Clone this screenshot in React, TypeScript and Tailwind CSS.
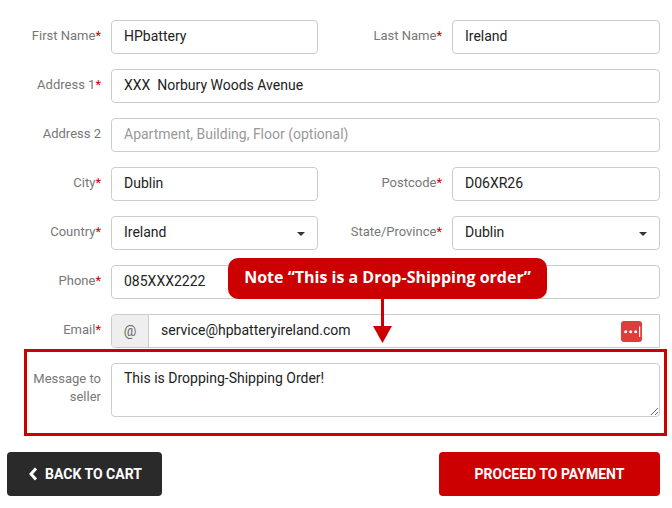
import React from "react";

const inputCls =
  "h-[34px] w-full rounded-[4px] border border-[#cccccc] bg-white pl-3 pr-3 pb-[2px] text-[14px] text-[#222222] placeholder:text-[#999999] outline-none";

function Label({ text, req = true, className = "" }: { text: string; req?: boolean; className?: string }) {
  return (
    <div className={`pt-[7px] text-right text-[13px] leading-[18px] text-[#777777] ${className}`}>
      {text}
      {req && <span className="text-[#cc0000]">*</span>}
    </div>
  );
}

function Select({ value }: { value: string }) {
  return (
    <div className="flex h-[34px] w-full items-center justify-between rounded-[4px] border border-[#cccccc] bg-white pl-3 pr-[12px] text-[14px] text-[#222222]">
      <span className="pb-[2px]">{value}</span>
      <span className="mt-[1px] h-0 w-0 border-x-[4px] border-t-[4px] border-x-transparent border-t-[#333333]" />
    </div>
  );
}

export default function App() {
  return (
    <div
      className="relative h-[508px] w-[672px] overflow-hidden bg-white pt-5"
      style={{ fontFamily: "Roboto, sans-serif" }}
    >
      <div className="grid w-[660px] grid-cols-[101px_207px_114px_208px] gap-x-[10px] gap-y-[15px]">
        <Label text="First Name" />
        <input readOnly className={inputCls} defaultValue="HPbattery" />
        <Label text="Last Name" />
        <input readOnly className={inputCls} defaultValue="Ireland" />

        <Label text="Address 1" />
        <input readOnly className={`${inputCls} col-span-3`} defaultValue="XXX  Norbury Woods Avenue" />

        <Label text="Address 2" req={false} />
        <input readOnly className={`${inputCls} col-span-3`} placeholder="Apartment, Building, Floor (optional)" />

        <Label text="City" />
        <input readOnly className={inputCls} defaultValue="Dublin" />
        <Label text="Postcode" />
        <input readOnly className={inputCls} defaultValue="D06XR26" />

        <Label text="Country" />
        <Select value="Ireland" />
        <Label text="State/Province" />
        <Select value="Dublin" />

        <Label text="Phone" />
        <input readOnly className={`${inputCls} col-span-3`} defaultValue="085XXX2222" />

        <Label text="Email" />
        <div className="col-span-3 flex h-[34px] rounded-l-[4px] border border-[#cccccc]">
          <div className="flex w-[37px] items-center justify-center rounded-l-[3px] border-r border-[#cccccc] bg-[#eeeeee] text-[14px] text-[#666666]">
            @
          </div>
          <div className="flex flex-1 items-center justify-between pl-3 pr-[17px] text-[14px] text-[#222222]">
            <span className="pb-[2px]">service@hpbatteryireland.com</span>
            <span className="block h-[21px] w-[21px] rounded-[3px] bg-[#e03c3c]">
              <svg width="21" height="21" viewBox="0 0 21 21" className="block">
                <circle cx="4.7" cy="10.7" r="1.5" fill="#fff" />
                <circle cx="9.7" cy="10.7" r="1.5" fill="#fff" />
                <circle cx="14.7" cy="10.7" r="1.5" fill="#fff" />
                <rect x="18" y="5.5" width="1.2" height="10.5" fill="#fff" />
              </svg>
            </span>
          </div>
        </div>

        <Label text="Message to seller" req={false} className="pl-[30px]" />
        <textarea
          readOnly
          className="col-span-3 block h-[54px] w-full rounded-[4px] border border-[#cccccc] bg-white px-3 py-[4px] text-[14px] leading-[20px] text-[#222222] outline-none"
          defaultValue="This is Dropping-Shipping Order!"
        />
      </div>

      <div className="mt-[35px] flex w-[660px] justify-between pl-[7px]">
        <button className="flex h-[44px] w-[155px] items-center justify-center gap-[7px] rounded-[4px] bg-[#2a2a2a] pl-[2px] text-[14px] font-bold text-white">
          <svg width="9" height="14" viewBox="0 0 9 14">
            <path d="M7 1.5 L2 7 L7 12.5" fill="none" stroke="#fff" strokeWidth="3" />
          </svg>
          <span>BACK TO CART</span>
        </button>
        <button className="h-[44px] w-[221px] rounded-[4px] bg-[#cc0000] text-[14px] font-bold text-white">
          PROCEED TO PAYMENT
        </button>
      </div>

      {/* red annotation frame */}
      <div className="absolute left-[24px] top-[349px] h-[87px] w-[643px] border-[3px] border-[#cc0000]" />

      {/* annotation callout */}
      <div
        className="absolute left-[228px] top-[258px] flex h-[41px] w-[319px] items-center justify-center rounded-[10px] bg-[#cc0000] pb-[3px] text-[16px] font-bold text-white"
        style={{ fontFamily: '"Open Sans", sans-serif' }}
      >
        Note “This is a Drop-Shipping order”
      </div>
      <svg className="absolute left-[372px] top-[299px]" width="21" height="45" viewBox="0 0 21 45">
        <rect x="9" y="0" width="3" height="28" fill="#cc0000" />
        <polygon points="1,27 20,27 10.5,44" fill="#cc0000" />
      </svg>
    </div>
  );
}
